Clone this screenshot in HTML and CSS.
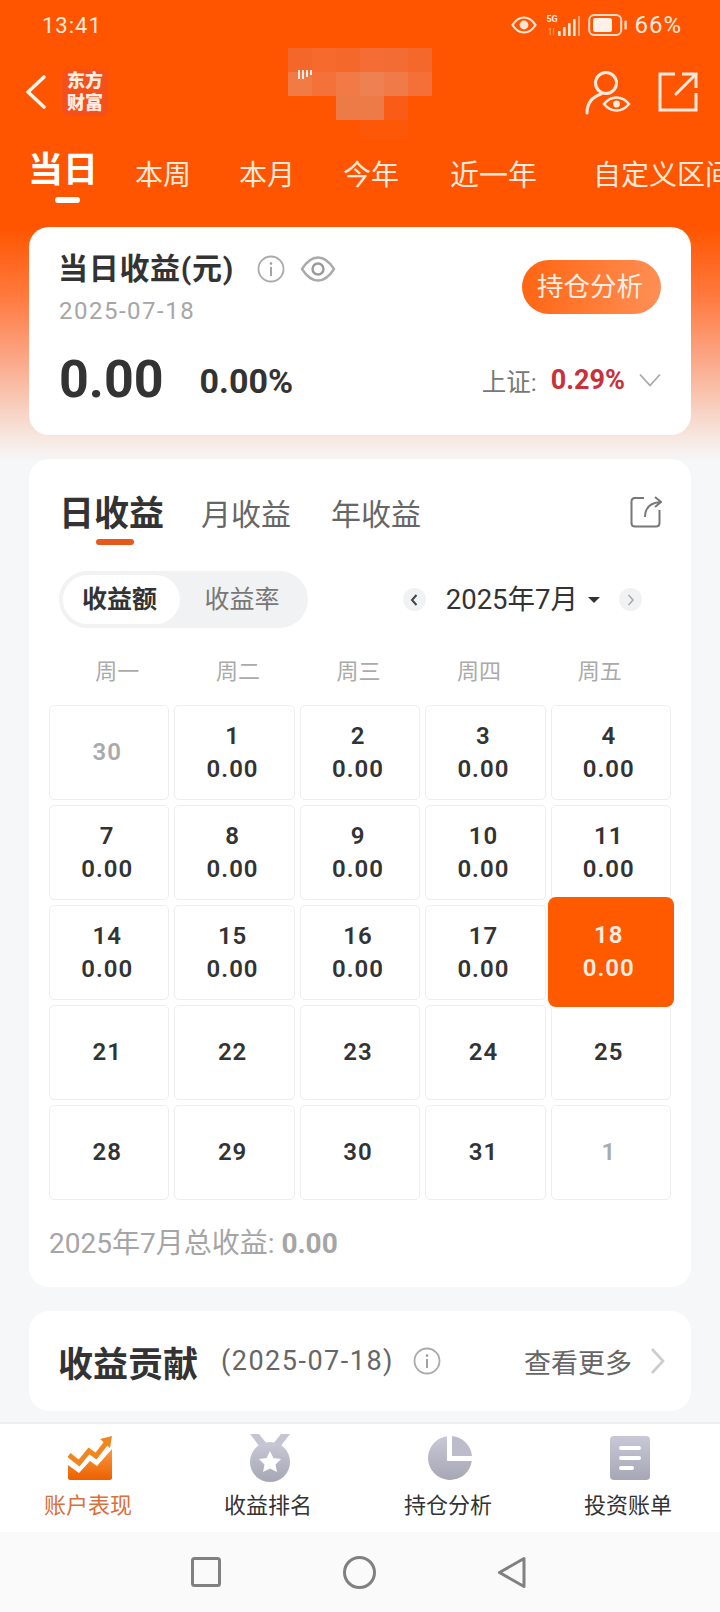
FILE: index.html
```html
<!DOCTYPE html>
<html lang="zh-CN">
<head>
<meta charset="UTF-8" />
<meta name="viewport" content="width=device-width, initial-scale=1" />
<title>账户表现</title>
<link rel="stylesheet" href="styles.css">
</head>
<body>

<header class="top">
  <div class="status-bar">
    <span class="clock">13:41</span>
    <div class="status-right">
      <svg class="st-eye" width="26" height="18" viewBox="0 0 26 18" fill="none"><path d="M1.5 9C5 3.5 9 1.5 13 1.5S21 3.5 24.5 9C21 14.5 17 16.5 13 16.5S5 14.5 1.5 9Z" stroke="#ffe6d6" stroke-width="2.2"/><circle cx="13" cy="9" r="4.4" fill="#ffe6d6"/></svg>
      <div class="net">
        <span class="net-5g">5G</span>
        <span class="net-1">1l</span>
        <svg width="24" height="22" viewBox="0 0 24 22"><g fill="#ffe6d6"><rect x="1" y="16" width="2.6" height="5"/><rect x="6" y="12" width="2.6" height="9"/><rect x="11" y="8" width="2.6" height="13"/><rect x="16" y="4" width="2.6" height="17"/></g><rect x="21" y="1" width="2" height="20" fill="#ffa57a"/></svg>
      </div>
      <svg class="battery" width="40" height="24" viewBox="0 0 40 24" fill="none"><rect x="1.2" y="2" width="32" height="20" rx="5" stroke="#ffdcc6" stroke-width="2"/><rect x="5" y="5" width="19" height="14" rx="2.5" fill="#fff1e8"/><rect x="36.4" y="7.500" width="2.4" height="9" rx="1" fill="#ffdcc6"/></svg>
      <span class="battery-num">66%</span>
    </div>
  </div>

  <div class="nav-row">
    <svg class="back" width="24" height="36" viewBox="0 0 24 36" fill="none"><path d="M20 3L4 18L20 33" stroke="#fff3ea" stroke-width="3.6" stroke-linecap="round" stroke-linejoin="round"/></svg>
    <div class="logo">东方<br>财富</div>
    <svg class="mosaic" width="150" height="100" viewBox="0 0 150 100">
      <g>
        <rect x="0" y="0" width="24" height="24" fill="#f4672b"/><rect x="24" y="0" width="24" height="24" fill="#f76a2e"/><rect x="48" y="0" width="24" height="24" fill="#f5682c"/><rect x="72" y="0" width="24" height="24" fill="#f56d35"/><rect x="96" y="0" width="24" height="24" fill="#f36c33"/><rect x="120" y="0" width="24" height="24" fill="#f5682c"/>
        <rect x="0" y="24" width="24" height="24" fill="#f17a45"/><rect x="24" y="24" width="24" height="24" fill="#f47239"/><rect x="48" y="24" width="24" height="24" fill="#f27a46"/><rect x="72" y="24" width="24" height="24" fill="#ee8152"/><rect x="96" y="24" width="24" height="24" fill="#f07b48"/><rect x="120" y="24" width="24" height="24" fill="#f47038"/>
        <rect x="48" y="48" width="48" height="24" fill="#ec7b48"/><rect x="96" y="48" width="24" height="24" fill="#fa5c18"/><rect x="72" y="72" width="48" height="20" fill="#fd5808"/>
      </g>
      <g fill="#fff" opacity=".85"><rect x="10" y="22" width="2" height="9"/><rect x="14" y="22" width="2" height="9"/><rect x="18" y="22" width="2" height="7"/><rect x="22" y="22" width="2" height="5"/></g>
    </svg>
    <div class="nav-icons">
      <svg width="48" height="48" viewBox="0 0 48 48" fill="none"><circle cx="22" cy="15" r="10.5" stroke="#ffeadd" stroke-width="3"/><path d="M3 45C3 35 8 29 17 26" stroke="#ffeadd" stroke-width="3" stroke-linecap="round"/><path d="M20 36C24 31 29 29.500 32.500 29.500S41 31 45 36C41 41 36 42.500 32.500 42.500S24 41 20 36Z" stroke="#ffeadd" stroke-width="2.600"/><circle cx="32.500" cy="36" r="3.400" fill="#ffeadd"/></svg>
      <svg width="40" height="40" viewBox="0 0 40 40" fill="none"><path d="M17 2H2V38H38V21" stroke="#ffeadd" stroke-width="3"/><path d="M24 2H38V16" stroke="#ffeadd" stroke-width="3"/><path d="M37 3L18 22" stroke="#ffeadd" stroke-width="3" stroke-linecap="round"/></svg>
    </div>
  </div>

  <nav class="range-tabs">
    <span class="range-tab active">当日</span>
    <span class="range-tab">本周</span>
    <span class="range-tab">本月</span>
    <span class="range-tab">今年</span>
    <span class="range-tab">近一年</span>
    <span class="range-tab">自定义区间</span>
  </nav>
</header>

<main class="content">
  <section class="card today">
    <div class="today-head">
      <div>
        <div class="today-title">
          <h2>当日收益(元)</h2>
          <svg width="28" height="28" viewBox="0 0 28 28" fill="none"><circle cx="14" cy="14" r="12.500" stroke="#aaa" stroke-width="1.800"/><circle cx="14" cy="8.500" r="1.300" fill="#999"/><path d="M14 12V21" stroke="#999" stroke-width="1.800"/></svg>
          <svg class="eye" width="36" height="28" viewBox="0 0 36 28" fill="none"><path d="M2 14C7 6 12 2.500 18 2.500S29 6 34 14C29 22 24 25.500 18 25.500S7 22 2 14Z" stroke="#aaa" stroke-width="2.400"/><circle cx="18" cy="14" r="5.500" stroke="#999" stroke-width="2.400"/></svg>
        </div>
        <div class="today-date">2025-07-18</div>
      </div>
      <span class="analysis-btn">持仓分析</span>
    </div>
    <div class="today-nums">
      <span class="amount">0.00</span>
      <span class="rate">0.00%</span>
      <span class="index-name">上证:</span>
      <span class="index-val">0.29%</span>
      <svg width="22" height="14" viewBox="0 0 22 14" fill="none"><path d="M1 1.500L11 12.500L21 1.500" stroke="#aaa" stroke-width="1.800"/></svg>
    </div>
  </section>

  <section class="card calendar">
    <div class="cal-tabs">
      <span class="cal-tab active">日收益</span>
      <span class="cal-tab">月收益</span>
      <span class="cal-tab">年收益</span>
      <svg class="cal-share" width="32" height="32" viewBox="0 0 32 32" fill="none"><path d="M14 2H5C3 2 1.500 3.500 1.500 5.500V27C1.500 29 3 30.500 5 30.500H26C28 30.500 29.500 29 29.500 27V14" stroke="#777" stroke-width="2"/><path d="M15 21C15 13 19 7 30 6M25 1L31 6L25 11" stroke="#777" stroke-width="2"/></svg>
    </div>

    <div class="cal-controls">
      <div class="segment">
        <span class="segment-item active">收益额</span>
        <span class="segment-item">收益率</span>
      </div>
      <div class="month-nav">
        <span class="month-arrow"><svg width="8" height="12" viewBox="0 0 8 12" fill="none"><path d="M6.500 1L2 6L6.500 11" stroke="#444" stroke-width="2"/></svg></span>
        <span class="month-label">2025年7月</span>
        <span class="caret"></span>
        <span class="month-arrow"><svg width="8" height="12" viewBox="0 0 8 12" fill="none"><path d="M1.500 1L6 6L1.500 11" stroke="#aaa" stroke-width="1.600"/></svg></span>
      </div>
    </div>

    <div class="week-head">
      <span>周一</span><span>周二</span><span>周三</span><span>周四</span><span>周五</span>
    </div>

    <div class="days">
      <div class="day muted">30</div>
      <div class="day">1<br>0.00</div>
      <div class="day">2<br>0.00</div>
      <div class="day">3<br>0.00</div>
      <div class="day">4<br>0.00</div>
      <div class="day">7<br>0.00</div>
      <div class="day">8<br>0.00</div>
      <div class="day">9<br>0.00</div>
      <div class="day">10<br>0.00</div>
      <div class="day">11<br>0.00</div>
      <div class="day">14<br>0.00</div>
      <div class="day">15<br>0.00</div>
      <div class="day">16<br>0.00</div>
      <div class="day">17<br>0.00</div>
      <div class="day current">18<br>0.00</div>
      <div class="day">21</div>
      <div class="day">22</div>
      <div class="day">23</div>
      <div class="day">24</div>
      <div class="day">25</div>
      <div class="day">28</div>
      <div class="day">29</div>
      <div class="day">30</div>
      <div class="day">31</div>
      <div class="day muted">1</div>
    </div>

    <div class="month-total">2025年7月总收益: <b>0.00</b></div>
  </section>

  <section class="card contrib">
    <h2>收益贡献</h2>
    <span class="contrib-date">(2025-07-18)</span>
    <svg width="28" height="28" viewBox="0 0 28 28" fill="none"><circle cx="14" cy="14" r="12.500" stroke="#aaa" stroke-width="1.800"/><circle cx="14" cy="8.500" r="1.300" fill="#999"/><path d="M14 12V21" stroke="#999" stroke-width="1.800"/></svg>
    <span class="contrib-more">查看更多</span>
    <svg width="15" height="28" viewBox="0 0 15 28" fill="none"><path d="M2 2L13 14L2 26" stroke="#ccc" stroke-width="2.600"/></svg>
  </section>
</main>

<footer class="tabbar">
  <div class="tabbar-item active">
    <svg width="44" height="44" viewBox="0 0 44 44">
      <defs><linearGradient id="chartFill" x1="0" y1="0" x2="0" y2="1"><stop offset="0" stop-color="#f79a3c"/><stop offset="1" stop-color="#ec6000"/></linearGradient></defs>
      <path d="M0 29L11 37L22 25L29 30L44 13V42C44 43 43 44 42 44H2C1 44 0 43 0 42Z" fill="url(#chartFill)"/>
      <path d="M1 19L11 27L21 15L28 20L39 6" fill="none" stroke="#f0861f" stroke-width="5"/>
      <path d="M32 3L44 0L42 12Z" fill="#f0861f"/>
    </svg>
    <span>账户表现</span>
  </div>
  <div class="tabbar-item">
    <svg width="40" height="48" viewBox="0 0 40 48">
      <defs><linearGradient id="greyFill" x1="0" y1="0" x2="0" y2="1"><stop offset="0" stop-color="#c8c8d6"/><stop offset="1" stop-color="#a6a6b4"/></linearGradient></defs>
      <path d="M0 0H9L17 10L10 13Z" fill="#c4c4d2"/><path d="M40 0H31L23 10L30 13Z" fill="#c4c4d2"/>
      <circle cx="20" cy="28" r="20" fill="url(#greyFill)"/>
      <path d="M20 17L23.400 24L31 25L25.500 30.400L27 38L20 34.400L13 38L14.500 30.400L9 25L16.600 24Z" fill="#fff"/>
    </svg>
    <span>收益排名</span>
  </div>
  <div class="tabbar-item">
    <svg width="44" height="44" viewBox="0 0 44 44">
      <defs><linearGradient id="pieFill" x1="0" y1="0" x2="0" y2="1"><stop offset="0" stop-color="#c8c8d6"/><stop offset="1" stop-color="#a6a6b4"/></linearGradient></defs>
      <path d="M19 .2V25H43.800A22 22 0 1 1 19 .2Z" fill="url(#pieFill)"/>
      <path d="M24 .1A22 22 0 0 1 44 20H24Z" fill="#bcbccb"/>
    </svg>
    <span>持仓分析</span>
  </div>
  <div class="tabbar-item">
    <svg width="40" height="44" viewBox="0 0 40 44">
      <rect width="40" height="44" rx="4" fill="url(#pieFill)"/>
      <g fill="#fff"><rect x="9" y="10" width="22" height="4" rx="2"/><rect x="9" y="20" width="22" height="4" rx="2"/><rect x="9" y="30" width="15" height="4" rx="2"/></g>
    </svg>
    <span>投资账单</span>
  </div>
</footer>

<div class="sys-nav">
  <svg width="30" height="30" viewBox="0 0 30 30" fill="none"><rect x="1.500" y="1.500" width="27" height="27" rx="2" stroke="#808080" stroke-width="3"/></svg>
  <svg width="33" height="33" viewBox="0 0 33 33" fill="none"><circle cx="16.500" cy="16.500" r="15" stroke="#808080" stroke-width="3"/></svg>
  <svg width="29" height="33" viewBox="0 0 29 33" fill="none"><path d="M27 2.500V30.500L2.500 16.500Z" stroke="#808080" stroke-width="3" stroke-linejoin="round"/></svg>
</div>

</body>
</html>
```

FILE: styles.css
```css
* {
  box-sizing: border-box;
}

body {
  margin: 0;
  width: 720px;
  height: 1612px;
  overflow: hidden;
  display: flex;
  flex-direction: column;
  font-family: Roboto, "Noto Sans CJK SC", sans-serif;
  color: #333;
  background: #f6f7f9;
}

h2 {
  margin: 0;
}

/* orange top area */
.top {
  height: 227px;
  flex: none;
  background: #ff5500;
  color: #ffeadd;
}

.status-bar {
  height: 50px;
  padding: 0 38px 0 42px;
  display: flex;
  align-items: center;
  justify-content: space-between;
}

.clock {
  font-size: 22px;
  letter-spacing: 1px;
}

.status-right {
  display: flex;
  align-items: center;
}

.net {
  position: relative;
  margin-left: 9px;
  padding-left: 11px;
  height: 24px;
  display: flex;
  align-items: flex-end;
}

.net-5g {
  position: absolute;
  left: 0;
  top: 1px;
  font-size: 9px;
  line-height: 10px;
  font-weight: 700;
}

.net-1 {
  position: absolute;
  left: 1px;
  bottom: 0;
  font-size: 9px;
  line-height: 10px;
  color: #ffa57a;
}

.battery {
  margin-left: 7px;
}

.battery-num {
  margin-left: 6px;
  font-size: 24px;
  letter-spacing: 1px;
}

.nav-row {
  position: relative;
  height: 84px;
  padding: 0 22px 0 24px;
  display: flex;
  align-items: center;
}

.logo {
  margin-left: 14px;
  width: 46px;
  height: 47px;
  border-radius: 8px;
  background: #f4501c;
  font-size: 18px;
  line-height: 22px;
  font-weight: 900;
  text-align: center;
  color: #ffeee2;
  padding-top: 1px;
}

.mosaic {
  position: absolute;
  left: 288px;
  top: -2px;
}

.nav-icons {
  margin-left: auto;
  display: flex;
  align-items: center;
  gap: 26px;
}

.range-tabs {
  height: 93px;
  padding: 23px 0 0 28px;
  display: flex;
  align-items: flex-start;
  overflow: hidden;
  white-space: nowrap;
}

.range-tab {
  flex: none;
  margin-right: 48px;
  font-size: 28px;
  line-height: 34px;
  padding-top: 2px;
}

.range-tab:nth-child(4) {
  margin-right: 51px;
}

.range-tab:nth-child(5) {
  font-size: 29px;
  margin-right: 56px;
}

.range-tab.active {
  position: relative;
  margin-right: 37px;
  padding-top: 0;
  margin-top: -3px;
  font-size: 35px;
  font-weight: 700;
  color: #fff;
}

.range-tab.active::after {
  content: "";
  position: absolute;
  left: 27px;
  bottom: -15px;
  width: 25px;
  height: 6px;
  border-radius: 3px;
  background: #fff;
}

/* page body */
.content {
  flex: 1;
  padding: 0 29px;
  background: linear-gradient(#ff5500 0, #ff7a3f 70px, #fba585 130px, #f6e7e0 210px, #f6f7f9 235px);
  overflow: hidden;
}

.card {
  background: #fff;
  border-radius: 20px;
  margin-bottom: 24px;
}

.today {
  height: 208px;
  padding: 24px 30px 0 29px;
}

.today-head {
  display: flex;
  justify-content: space-between;
  align-items: flex-start;
}

.today-title {
  display: flex;
  align-items: center;
}

.today-title h2 {
  font-size: 30px;
  line-height: 36px;
  font-weight: 700;
  letter-spacing: .7px;
  margin-right: 23px;
}

.today-title .eye {
  margin-left: 15px;
}

.today-date {
  margin: 9px 0 0 1px;
  font-size: 24px;
  line-height: 30px;
  letter-spacing: 1.500px;
  color: #a6a6a6;
}

.analysis-btn {
  margin-top: 9px;
  width: 139px;
  height: 54px;
  padding-right: 3px;
  border-radius: 27px;
  background: linear-gradient(100deg, #ff6410, #ff9057);
  color: #ffeee3;
  font-size: 26.500px;
  line-height: 54px;
  text-align: center;
}

.today-nums {
  margin-top: 24px;
  display: flex;
  align-items: center;
}

.amount {
  margin-left: 1px;
  font-size: 52px;
  line-height: 60px;
  font-weight: 700;
}

.rate {
  margin-left: 36px;
  margin-top: 2px;
  font-size: 34px;
  font-weight: 700;
}

.index-name {
  margin-left: auto;
  font-size: 24.500px;
  color: #777;
}

.index-val {
  margin-left: 14px;
  font-size: 27px;
  font-weight: 700;
  color: #c9303a;
}

.today-nums svg {
  margin-left: 14px;
}

/* calendar card */
.calendar {
  height: 828px;
  padding: 0 20px;
}

.cal-tabs {
  height: 112px;
  padding: 38px 9px 0 10px;
  display: flex;
  align-items: flex-start;
}

.cal-tab {
  font-size: 30px;
  line-height: 36px;
  color: #666;
  margin-right: 40px;
}

.cal-tab.active {
  position: relative;
  margin-right: 37px;
  font-size: 35px;
  font-weight: 700;
  color: #333;
}

.cal-tab.active::after {
  content: "";
  position: absolute;
  left: 37px;
  top: 42px;
  width: 38px;
  height: 6px;
  border-radius: 3px;
  background: #e55a1a;
}

.cal-share {
  margin-left: auto;
  margin-top: -1px;
}

.cal-controls {
  display: flex;
  align-items: center;
  justify-content: space-between;
  padding: 0 29px 0 10px;
}

.segment {
  width: 249px;
  height: 57px;
  padding: 4px;
  border-radius: 29px;
  background: #f1f2f4;
  display: flex;
}

.segment-item {
  flex: 1;
  font-size: 25px;
  line-height: 49px;
  text-align: center;
  color: #777;
}

.segment-item.active {
  flex: none;
  width: 117px;
  padding-right: 4px;
  border-radius: 25px;
  background: #fff;
  font-weight: 700;
  color: #333;
}

.month-nav {
  display: flex;
  align-items: center;
}

.month-arrow {
  width: 23px;
  height: 23px;
  border-radius: 50%;
  background: #f1f2f4;
  display: flex;
  align-items: center;
  justify-content: center;
}

.month-label {
  margin-left: 20px;
  font-size: 27.500px;
  line-height: 34px;
}

.caret {
  margin: 0 19px 0 10px;
  width: 0;
  height: 0;
  border: 6px solid transparent;
  border-top: 6px solid #333;
  border-bottom: 0;
}

.week-head {
  margin-top: 29px;
  padding: 0 11px 0 8px;
  display: grid;
  grid-template-columns: repeat(5, 1fr);
  text-align: center;
  font-size: 22px;
  line-height: 30px;
  color: #aaa;
}

.days {
  margin-top: 18px;
  display: grid;
  grid-template-columns: repeat(5, 1fr);
  grid-auto-rows: 95px;
  gap: 5px;
}

.day {
  border: 1px solid #eee;
  border-radius: 5px;
  padding-right: 4px;
  display: flex;
  align-items: center;
  justify-content: center;
  text-align: center;
  font-size: 24px;
  line-height: 33px;
  font-weight: 600;
  letter-spacing: 1px;
  color: #333;
}

.day.muted {
  color: #aaa;
}

.day.current {
  position: relative;
  margin: -8px -3px -7px;
  border: 0;
  border-radius: 8px;
  background: #ff5a00;
  color: #ffeee2;
}

.month-total {
  margin-top: 27px;
  font-size: 28px;
  line-height: 34px;
  color: #a5a5a5;
}

.month-total b {
  font-weight: 700;
}

/* contribution row */
.contrib {
  height: 100px;
  padding: 0 26px 0 29px;
  display: flex;
  align-items: center;
}

.contrib h2 {
  font-size: 35px;
  font-weight: 700;
}

.contrib-date {
  margin-left: 23px;
  margin-right: 19px;
  font-size: 27px;
  letter-spacing: 1.500px;
  color: #666;
}

.contrib-more {
  margin-left: auto;
  margin-right: 18px;
  font-size: 27px;
  color: #666;
}

/* bottom tabs */
.tabbar {
  flex: none;
  height: 110px;
  border-top: 2px solid #eee;
  background: #fff;
  display: grid;
  grid-template-columns: repeat(4, 180px);
}

.tabbar-item {
  height: 108px;
  padding-top: 10px;
  display: flex;
  flex-direction: column;
  align-items: center;
  font-size: 22px;
  line-height: 30px;
  color: #333;
}

.tabbar-item svg {
  height: 48px;
  flex: none;
}

.tabbar-item span {
  margin-top: 9px;
  margin-right: 4px;
}

.tabbar-item.active {
  color: #d9703a;
}

.sys-nav {
  flex: none;
  height: 80px;
  padding: 0 194px 0 191px;
  background: #fafafa;
  display: flex;
  align-items: center;
  justify-content: space-between;
}
```
